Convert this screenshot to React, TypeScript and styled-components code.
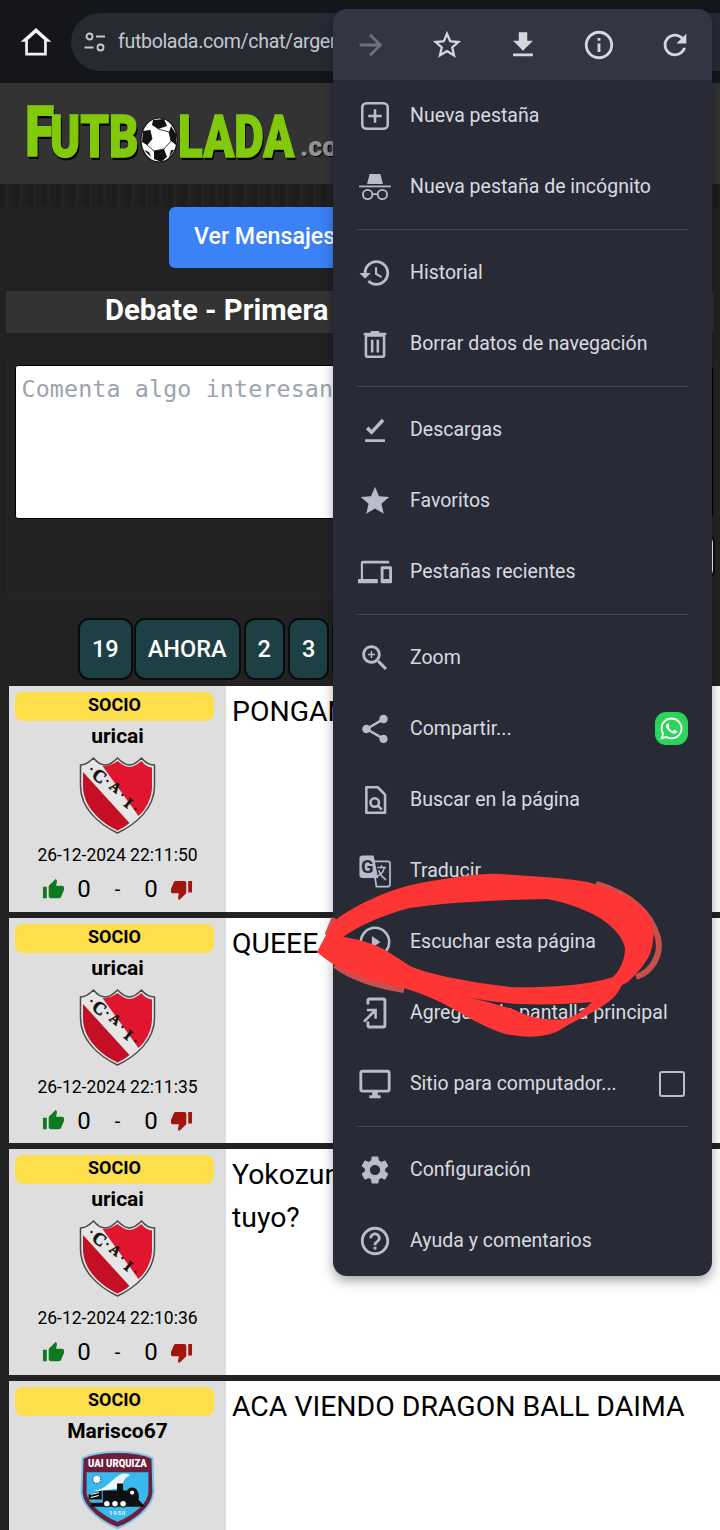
import React from "react";
import styled, { createGlobalStyle } from "styled-components";
import { FaWhatsapp } from "react-icons/fa";

const Global = createGlobalStyle`
  html, body {
    margin: 0;
    padding: 0;
    background: #222222;
    overflow: hidden;
  }
  * { box-sizing: border-box; }
`;

const Page = styled.div`
  position: relative;
  width: 720px;
  height: 1530px;
  overflow: hidden;
  background: #222222;
  font-family: Roboto, "Liberation Sans", sans-serif;
  color: #000;
`;

// Browser toolbar
const BrowserBar = styled.div`
  height: 83px;
  background: #14161c;
  display: flex;
  align-items: center;
  padding-left: 18px;
  gap: 17px;
`;

const UrlPill = styled.div`
  flex: 1;
  height: 58px;
  margin-right: -60px;
  border-radius: 29px;
  background: #262a33;
  display: flex;
  align-items: center;
  gap: 11px;
  padding-left: 12px;
  color: #c6c8ce;
  font-size: 19.6px;
  letter-spacing: -0.35px;
  white-space: nowrap;
  overflow: hidden;
`;

// Site header
const SiteHeader = styled.header`
  height: 101px;
  background: #333333;
  display: flex;
  align-items: center;
  padding: 0 0 0 25px;
`;

const Logo = styled.div`
  display: flex;
  align-items: flex-end;
  height: 60px;
  font-family: Roboto, sans-serif;
  font-weight: 900;
  color: #82c90c;
  text-shadow: 1px 2px 0 #000, -1px 1px 0 #000, 2px 3px 0 #000;
  white-space: nowrap;
  line-height: 1;
`;

const LogoLetters = styled.span<{ $size: number; $width: number }>`
  display: inline-block;
  width: ${(p) => p.$width}px;
  font-size: ${(p) => p.$size}px;
  margin-bottom: -3px;
  transform: scaleX(0.76);
  transform-origin: left bottom;
  -webkit-text-stroke: 1.5px #82c90c;
`;

const LogoInitial = styled(LogoLetters)`
  letter-spacing: -7px;
`;

const LogoDomain = styled.span`
  color: #949494;
  font-size: 27px;
  font-weight: 900;
  margin: 0 0 3px 1px;
  text-shadow: 1px 1px 0 #000;
`;

const LogoBall = styled.svg`
  width: 38px;
  height: 46px;
  margin: 0 0 1px 0;
  flex: none;
`;

const Band = styled.div`
  height: 23px;
  background: repeating-linear-gradient(90deg, #1c1c1c 0 5px, #232323 5px 9px, #1f1f1f 9px 14px);
`;

const ActionRow = styled.div`
  display: flex;
  padding-left: 169px;
`;

const BlueButton = styled.button`
  height: 61px;
  width: 382px;
  padding: 0 25px 4px;
  border: 0;
  border-radius: 6px;
  background: #3b82f6;
  color: #fff;
  font: 500 23.2px Roboto, sans-serif;
  text-align: left;
`;

const TitleBar = styled.h1`
  margin: 23px 6px 0;
  height: 42px;
  padding-left: 99px;
  background: #333333;
  color: #fff;
  font: 700 29.3px/38px Roboto, sans-serif;
  white-space: nowrap;
`;

const CommentPanel = styled.div`
  margin: 25px 1px 0 8px;
  height: 237px;
  padding: 7px 6px 0 7px;
  background: #232323;
  box-shadow: -1px 1px 0 #282828;
  display: flex;
  flex-direction: column;
`;

const CommentBox = styled.textarea`
  display: block;
  flex: none;
  height: 154px;
  width: 100%;
  padding: 5px 6px 5px 5.5px;
  border: 1px solid #000;
  border-radius: 3px;
  background: #fff;
  resize: none;
  font: 23.3px/36px "DejaVu Sans Mono", monospace;
  letter-spacing: 0.14px;
  &::placeholder { color: #9ca3af; opacity: 1; }
`;

const SubmitButton = styled.button`
  align-self: flex-end;
  margin: 14px -2px 0 0;
  width: 120px;
  height: 47px;
  border: 2px solid #0b0b0b;
  border-radius: 10px;
  background: #fff;
`;

// Paginator
const Pager = styled.nav`
  margin: 23px 0 6px;
  height: 62px;
  padding-left: 78px;
  display: flex;
  gap: 3px;
`;

const PageButton = styled.div`
  height: 62px;
  min-width: 41px;
  padding: 0 12px;
  display: flex;
  align-items: center;
  justify-content: center;
  background: #1c4044;
  border: 2px solid #0b0b0b;
  border-radius: 11px;
  color: #fff;
  font-size: 23.5px;
  font-weight: 500;
  &:first-child { margin-right: -2px; }
`;

// Chat rows
const RowList = styled.div`
  display: flex;
  flex-direction: column;
  gap: 6px;
  margin-left: 9px;
`;

const Row = styled.article`
  height: 225.67px;
  display: flex;
  flex: none;
`;

const UserCell = styled.div`
  width: 217px;
  flex: none;
  padding-top: 6px;
  background: #dedede;
  display: flex;
  flex-direction: column;
  align-items: center;
`;

const Badge = styled.div`
  align-self: flex-start;
  margin-left: 6px;
  width: 199px;
  height: 29px;
  border-radius: 8px;
  background: #fddf4b;
  font-size: 18px;
  font-weight: 700;
  line-height: 26px;
  text-align: center;
`;

const UserName = styled.div`
  height: 28px;
  margin-top: 1px;
  font-size: 21px;
  font-weight: 700;
  line-height: 28px;
`;

const Crest = styled.svg`
  display: block;
  width: 77px;
  height: 78px;
  margin-top: 6px;
`;

const DateText = styled.div`
  margin-top: 9px;
  height: 24px;
  font-size: 17.5px;
  line-height: 24px;
`;

const Votes = styled.div`
  margin-top: 8px;
  height: 28px;
  display: flex;
  align-items: center;
  gap: 12px;
  font-size: 24px;
`;

const VoteDash = styled.span`
  margin: 0 12px;
  font-size: 20px;
`;

const VoteIcon = styled.svg<{ $color: string }>`
  width: 23px;
  height: 23px;
  fill: ${(p) => p.$color};
`;

const Message = styled.div`
  flex: 1;
  background: #fff;
  padding: 4px 6px;
  font-size: 28.4px;
  line-height: 43px;
`;

// Chrome overflow menu
const Menu = styled.div`
  position: absolute;
  left: 333px;
  top: 9px;
  width: 379px;
  border-radius: 14px;
  background: #282b35;
  overflow: hidden;
  box-shadow: 0 5px 12px rgba(0, 0, 0, 0.35);
`;

const MenuTop = styled.div`
  height: 71px;
  background: #323642;
  display: flex;
  align-items: center;
  justify-content: space-between;
  padding: 0 20px 0 21px;
`;

const TopIcon = styled.svg<{ $dim?: boolean }>`
  width: 34px;
  height: 34px;
  fill: ${(p) => (p.$dim ? "#6d717c" : "#d5d7dd")};
`;

const MenuRow = styled.div`
  height: 71px;
  display: flex;
  align-items: center;
  padding: 0 24px 0 25px;
  gap: 18px;
  color: #d9dbe1;
  font-size: 19.5px;
`;

const MenuIcon = styled.svg`
  width: 34px;
  height: 34px;
  flex: none;
  fill: #b9bdcb;
  stroke: none;
`;

const MenuLabel = styled.span`
  flex: 1;
  white-space: nowrap;
`;

const Divider = styled.hr`
  margin: 7px 24px;
  border: 0;
  height: 1px;
  background: #444853;
`;

const WhatsTile = styled.div`
  width: 33px;
  height: 33px;
  border-radius: 11px;
  background: #2bd45a;
  color: #fff;
  display: flex;
  align-items: center;
  justify-content: center;
  font-size: 25px;
`;

const CheckBox = styled.div`
  width: 26px;
  height: 26px;
  margin-right: 3px;
  border: 2.5px solid #b9bdcb;
  border-radius: 3px;
`;

const Scribble = styled.svg`
  position: absolute;
  left: 300px;
  top: 860px;
  width: 380px;
  height: 190px;
`;

const home = "M12 2.6 1.8 11.9h3V21h14.4v-9.1h3L12 2.6zm0 3.2 5.4 4.9v8.5H6.6v-8.5L12 5.8z";
const thumbUp = "M1 21h4V9H1v12zm22-11c0-1.1-.9-2-2-2h-6.31l.95-4.57.03-.32c0-.41-.17-.79-.44-1.06L14.17 1 7.59 7.59C7.22 7.95 7 8.45 7 9v10c0 1.1.9 2 2 2h9c.83 0 1.54-.5 1.84-1.22l3.02-7.05c.09-.23.14-.47.14-.73v-2z";
const thumbDown = "M15 3H6c-.83 0-1.54.5-1.84 1.22l-3.02 7.05c-.09.23-.14.47-.14.73v2c0 1.1.9 2 2 2h6.31l-.95 4.57-.03.32c0 .41.17.79.44 1.06L9.83 23l6.59-6.59c.36-.36.58-.86.58-1.41V5c0-1.1-.9-2-2-2zm4 0v12h4V3h-4z";

const topIcons = [
  { d: "M12 4l-1.41 1.41L16.17 11H4v2h12.17l-5.58 5.59L12 20l8-8z", dim: true },
  { d: "M22 9.24l-7.19-.62L12 2 9.19 8.63 2 9.24l5.46 4.73L5.82 21 12 17.27 18.18 21l-1.63-7.03L22 9.24zM12 15.4l-3.76 2.27 1-4.28-3.32-2.88 4.38-.38L12 6.1l1.71 4.04 4.38.38-3.32 2.88 1 4.28L12 15.4z" },
  { d: "M19 9h-4V3H9v6H5l7 7 7-7zM5 18v2h14v-2H5z" },
  { d: "M11 7h2v2h-2zm0 4h2v6h-2zm1-9C6.48 2 2 6.48 2 12s4.48 10 10 10 10-4.48 10-10S17.52 2 12 2zm0 18c-4.41 0-8-3.59-8-8s3.59-8 8-8 8 3.59 8 8-3.59 8-8 8z" },
  { d: "M17.65 6.35C16.2 4.9 14.21 4 12 4c-4.42 0-7.99 3.58-7.99 8s3.57 8 7.99 8c3.73 0 6.84-2.55 7.73-6h-2.08c-.82 2.33-3.04 4-5.65 4-3.31 0-6-2.69-6-6s2.69-6 6-6c1.66 0 3.14.69 4.22 1.78L13 11h7V4l-2.35 2.35z" },
];

const line = { fill: "none", stroke: "#b9bdcb", strokeWidth: 1.8 };

const menuGroups: { label: string; icon: React.ReactNode; tail?: "whats" | "check" }[][] = [
  [
    {
      label: "Nueva pestaña",
      icon: (
        <>
          <rect x="3" y="3" width="18" height="18" rx="3" {...line} />
          <path d="M12 7.2v9.6M7.2 12h9.6" {...line} />
        </>
      ),
    },
    {
      label: "Nueva pestaña de incógnito",
      icon: (
        <>
          <path d="M8.2 2.8h7.6l1.8 7H6.4z" />
          <rect x="0.8" y="11" width="22.4" height="1.2" />
          <circle cx="6.8" cy="17.3" r="3.3" {...line} strokeWidth={1.3} />
          <circle cx="17.2" cy="17.3" r="3.3" {...line} strokeWidth={1.3} />
          <path d="M10.1 17h3.8" {...line} strokeWidth={1.3} />
        </>
      ),
    },
  ],
  [
    {
      label: "Historial",
      icon: <path d="M13 3c-4.97 0-9 4.03-9 9H1l3.89 3.89.07.14L9 12H6c0-3.87 3.13-7 7-7s7 3.13 7 7-3.13 7-7 7c-1.93 0-3.68-.79-4.94-2.06l-1.42 1.42C8.27 19.99 10.51 21 13 21c4.97 0 9-4.03 9-9s-4.03-9-9-9zm-1 5v5l4.28 2.54.72-1.21-3.5-2.08V8H12z" />,
    },
    {
      label: "Borrar datos de navegación",
      icon: (
        <>
          <path d="M4 4h16v1.8H4zM9 2.8h6V4H9z" />
          <rect x="5.6" y="6" width="12.8" height="15" rx="1" {...line} />
          <path d="M10 9v9M14 9v9" {...line} />
        </>
      ),
    },
  ],
  [
    { label: "Descargas", icon: <path d="M5 18.5h14v2H5v-2zm4.6-3.2L5.6 11.4l1.8-1.8 2.2 2.2L16.8 4l1.8 1.9-9 9.4z" /> },
    { label: "Favoritos", icon: <path d="M12 17.27L18.18 21l-1.64-7.03L22 9.24l-7.19-.61L12 2 9.19 8.63 2 9.24l5.46 4.73L5.82 21z" /> },
    {
      label: "Pestañas recientes",
      icon: <path d="M3.5 6H22V4H3.5C2.4 4 2 4.9 2 6v11H0v3h14v-3H3.5V6zm19.5 2h-6c-.55 0-1 .45-1 1v10c0 .55.45 1 1 1h6c.55 0 1-.45 1-1V9c0-.55-.45-1-1-1zm-1 9h-4v-7h4v7z" />,
    },
  ],
  [
    {
      label: "Zoom",
      icon: (
        <>
          <path d="M15.5 14h-.79l-.28-.27C15.41 12.59 16 11.11 16 9.5 16 5.91 13.09 3 9.5 3S3 5.91 3 9.5 5.91 16 9.5 16c1.61 0 3.09-.59 4.23-1.57l.27.28v.79l5 4.99L20.49 19l-4.99-5zm-6 0C7.01 14 5 11.99 5 9.5S7.01 5 9.5 5 14 7.01 14 9.5 11.99 14 9.5 14z" />
          <path d="M12 10h-2v2H9v-2H7V9h2V7h1v2h2v1z" />
        </>
      ),
    },
    {
      label: "Compartir...",
      tail: "whats",
      icon: <path d="M18 16.08c-.76 0-1.44.3-1.96.77L8.91 12.7c.05-.23.09-.46.09-.7s-.04-.47-.09-.7l7.05-4.11c.54.5 1.25.81 2.04.81 1.66 0 3-1.34 3-3s-1.34-3-3-3-3 1.34-3 3c0 .24.04.47.09.7L8.04 9.81C7.5 9.31 6.79 9 6 9c-1.66 0-3 1.34-3 3s1.34 3 3 3c.79 0 1.5-.31 2.04-.81l7.12 4.16c-.05.21-.08.43-.08.65 0 1.61 1.31 2.92 2.92 2.92 1.61 0 2.92-1.31 2.92-2.92s-1.31-2.92-2.92-2.92z" />,
    },
    {
      label: "Buscar en la página",
      icon: (
        <>
          <path d="M5.9 3h8l5.2 5.2V21H5.9z" {...line} strokeLinejoin="round" />
          <circle cx="11.8" cy="13.8" r="3" {...line} />
          <path d="M14 16l2.8 2.8" {...line} />
        </>
      ),
    },
    {
      label: "Traducir...",
      icon: (
        <>
          <path d="M10.4 5.2H21c1.1 0 1.6.7 1.6 1.6v14.6c0 1-.6 1.6-1.6 1.6H13z" {...line} fill="#282b35" strokeWidth={1.2} />
          <path d="M1 2.8C1 1.8 2 1 3 1h8l3.2 16H3c-1 0-2-.8-2-1.8z" />
          <text x="2.2" y="13.5" fontFamily="Roboto, sans-serif" fontWeight="700" fontSize="13" fill="#282b35">G</text>
          <path d="M13.6 9.5h6.2M16.6 8v1.5M18.6 9.5c-.6 3-2.4 5.2-5 6.3M14.6 11.4c.8 2.6 2.8 5 5.2 6.8" {...line} strokeWidth={1.1} />
        </>
      ),
    },
    {
      label: "Escuchar esta página",
      icon: (
        <>
          <circle cx="12" cy="12" r="10" {...line} />
          <path d="M9.8 7.8l6 4.2-6 4.2z" />
        </>
      ),
    },
    {
      label: "Agregar a la pantalla principal",
      icon: <path d="M18 1.01L8 1c-1.1 0-2 .9-2 2v3h2V3.2h10v17.6H8V18H6v3c0 1.1.9 2 2 2h10c1.1 0 2-.9 2-2V3c0-1.1-.9-1.99-2-1.99zM11.5 16h1.8V9H6.3v1.8h3.9L3.6 17.4l1.3 1.3 6.6-6.6V16z" />,
    },
    {
      label: "Sitio para computador...",
      tail: "check",
      icon: <path d="M21 2H3c-1.1 0-2 .9-2 2v12c0 1.1.9 2 2 2h7v2H8v2h8v-2h-2v-2h7c1.1 0 2-.9 2-2V4c0-1.1-.9-2-2-2zm0 14H3V4h18v12z" />,
    },
  ],
  [
    {
      label: "Configuración",
      icon: <path d="M19.14 12.94c.04-.3.06-.61.06-.94 0-.32-.02-.64-.07-.94l2.03-1.58c.18-.14.23-.41.12-.61l-1.92-3.32c-.12-.22-.37-.29-.59-.22l-2.39.96c-.5-.38-1.03-.7-1.62-.94l-.36-2.54c-.04-.24-.24-.41-.48-.41h-3.84c-.24 0-.43.17-.47.41l-.36 2.54c-.59.24-1.13.57-1.62.94l-2.39-.96c-.22-.08-.47 0-.59.22L2.74 8.87c-.12.21-.08.47.12.61l2.03 1.58c-.05.3-.09.63-.09.94s.02.64.07.94l-2.03 1.58c-.18.14-.23.41-.12.61l1.92 3.32c.12.22.37.29.59.22l2.39-.96c.5.38 1.03.7 1.62.94l.36 2.54c.05.24.24.41.48.41h3.84c.24 0 .44-.17.47-.41l.36-2.54c.59-.24 1.13-.56 1.62-.94l2.39.96c.22.08.47 0 .59-.22l1.92-3.32c.12-.22.07-.47-.12-.61l-2.01-1.58zM12 15.6c-1.98 0-3.6-1.62-3.6-3.6s1.62-3.6 3.6-3.6 3.6 1.62 3.6 3.6-1.62 3.6-3.6 3.6z" />,
    },
    {
      label: "Ayuda y comentarios",
      icon: <path d="M11 18h2v-2h-2v2zm1-16C6.48 2 2 6.48 2 12s4.48 10 10 10 10-4.48 10-10S17.52 2 12 2zm0 18c-4.41 0-8-3.59-8-8s3.59-8 8-8 8 3.59 8 8-3.59 8-8 8zm0-14c-2.21 0-4 1.79-4 4h2c0-1.1.9-2 2-2s2 .9 2 2c0 2-3 1.75-3 5h2c0-2.25 3-2.5 3-5 0-2.21-1.79-4-4-4z" />,
    },
  ],
];

const posts = [
  { club: "cai", user: "uricai", date: "26-12-2024 22:11:50", text: ["PONGAN"] },
  { club: "cai", user: "uricai", date: "26-12-2024 22:11:35", text: ["QUEEE"] },
  { club: "cai", user: "uricai", date: "26-12-2024 22:10:36", text: ["Yokozuna", "tuyo?"] },
  { club: "uai", user: "Marisco67", date: "", text: ["ACA VIENDO DRAGON BALL DAIMA"] },
];

function CaiCrest() {
  const shield = "M1 9 C5 9 10 6 14 2 C18 7 22 9 26 9 C30 9 34 6 38 2 C42 6 46 9 50 9 C54 9 58 6 62 2 C66 7 70 9 75 9 L75 30 C75 52 57 68 38 77 C19 68 1 52 1 30 Z";
  return (
    <Crest viewBox="0 0 76 78">
      <path d={shield} fill="#e6e6e6" stroke="#4a4a4a" strokeWidth="1.5" />
      <path d="M23 10 C29 10 34 8 38 5 C42 8 46 11 50 11 C54 11 58 8 62 5 C65 9 68 11 72.5 11.5 V32 C72 43 66 54 59 60 Z" fill="#e0162f" />
      <path d="M3.5 16 L50 67 C45 71 41 73 38 74.5 C20 66 3.5 50 3.5 30 Z" fill="#c50f25" />
      <g fontFamily="'Liberation Serif', serif" fontWeight="700" fill="#111" textAnchor="middle" stroke="#111" strokeWidth="0.5">
        <text x="20" y="26" transform="rotate(38 20 20)" fontSize="18">C</text>
        <text x="36" y="36" transform="rotate(38 36 31)" fontSize="14">A</text>
        <text x="49" y="52" transform="rotate(38 49 47)" fontSize="15">I</text>
      </g>
      <g fill="#111">
        <circle cx="12" cy="13" r="1.2" />
        <circle cx="28" cy="25" r="1.2" />
        <circle cx="43" cy="39" r="1.2" />
        <circle cx="56" cy="53" r="1.2" />
      </g>
    </Crest>
  );
}

function UaiCrest() {
  return (
    <Crest viewBox="2 1 73 77">
      <path d="M4 8 C14 3 26 2 38.5 2 C51 2 63 3 73 8 L74 42 C73 58 52 72 38.5 77 C25 72 4 58 3 42 Z" fill="#6d1e3b" stroke="#7cc6ee" strokeWidth="2" />
      <path d="M8 22 H69 V42 C68 55 50 66 38.5 71 C27 66 9 55 8 42 Z" fill="#38b8ec" />
      <text x="38.5" y="17" textAnchor="middle" fontFamily="Roboto, sans-serif" fontWeight="900" fontSize="11" fill="#fff" textLength="58" lengthAdjust="spacingAndGlyphs">UAI URQUIZA</text>
      <circle cx="18" cy="29" r="4" fill="#fff" stroke="#1d6f9d" strokeDasharray="1 1" strokeWidth="1.5" />
      <path d="M15 40 C26 40 32 30 40 25 C44 22 50 23 51 25 C46 27 43 31 44 38 C36 37 26 42 15 40 Z" fill="#eaf7ff" />
      <path d="M10 44 L23 40 V49 H10 Z M24 40 H38 V33 H44 V40 H48 C50 36 56 36 58 40 C60 44 60 47 59 49 L66 56 H12 V52 H24 Z" fill="#101010" />
      <path d="M12 44 L20 42 M12 47 L20 45" stroke="#fff" strokeWidth="1" />
      <circle cx="28" cy="53" r="3.2" fill="#fff" stroke="#111" />
      <circle cx="36" cy="53" r="3.2" fill="#fff" stroke="#111" />
      <circle cx="44" cy="53" r="3.2" fill="#fff" stroke="#111" />
      <circle cx="53" cy="42" r="2.6" fill="#fff" stroke="#111" />
      <text x="38.5" y="64" textAnchor="middle" fontFamily="Roboto, sans-serif" fontWeight="700" fontSize="6" fill="#e6f6ff" letterSpacing="0.8">1950</text>
    </Crest>
  );
}

function Ball() {
  return (
    <LogoBall viewBox="0 0 38 46">
      <ellipse cx="19" cy="23" rx="18" ry="22" fill="#fff" stroke="#111" strokeWidth="1.2" />
      <path d="M13 3 L24 2 L27 9 L18 12 L12 8 Z M31 9 L36 17 L36 28 L31 24 L29 15 Z M3 14 L10 13 L12 22 L7 28 L2 25 Z M14 34 L24 32 L27 40 L21 45 L14 42 Z M31 33 L34 33 L29 41 Z M4 33 L9 35 L11 40 Z" fill="#111" />
      <path d="M18 12 L29 15 L31 24 L24 32 L14 34 L7 28 L12 22 L10 13" fill="none" stroke="#111" strokeWidth="0.8" />
    </LogoBall>
  );
}

export default function App() {
  return (
    <Page>
      <Global />
      <BrowserBar>
        <svg width="36" height="36" viewBox="0 0 24 24" fill="#f2f2f2" style={{ flex: "none" }}>
          <path d={home} />
        </svg>
        <UrlPill>
          <svg width="24" height="24" viewBox="0 0 24 24" fill="none" stroke="#c6c8ce" strokeWidth="1.9" style={{ flex: "none" }}>
            <circle cx="6.5" cy="6.5" r="3" />
            <path d="M13 6.5h9M1.5 17.5h9" />
            <circle cx="17.5" cy="17.5" r="3" />
          </svg>
          futbolada.com/chat/argentina
        </UrlPill>
      </BrowserBar>

      <SiteHeader>
        <Logo>
          <LogoInitial $size={70} $width={25}>F</LogoInitial>
          <LogoLetters $size={60} $width={90}>UTB</LogoLetters>
          <Ball />
          <LogoLetters $size={60} $width={121}>LADA</LogoLetters>
          <LogoDomain>.com</LogoDomain>
        </Logo>
      </SiteHeader>
      <Band />

      <ActionRow>
        <BlueButton>Ver Mensajes</BlueButton>
      </ActionRow>
      <TitleBar>Debate - Primera</TitleBar>

      <CommentPanel>
        <CommentBox placeholder="Comenta algo interesante..." />
        <SubmitButton />
      </CommentPanel>

      <Pager>
        {["19", "AHORA", "2", "3", ""].map((n) => (
          <PageButton key={n}>{n}</PageButton>
        ))}
      </Pager>

      <RowList>
        {posts.map((post) => (
          <Row key={post.date + post.user}>
            <UserCell>
              <Badge>SOCIO</Badge>
              <UserName>{post.user}</UserName>
              {post.club === "cai" ? <CaiCrest /> : <UaiCrest />}
              {post.date && (
                <>
                  <DateText>{post.date}</DateText>
                  <Votes>
                    <VoteIcon viewBox="0 0 24 24" $color="#0d7a1f"><path d={thumbUp} /></VoteIcon>
                    <span>0</span>
                    <VoteDash>-</VoteDash>
                    <span>0</span>
                    <VoteIcon viewBox="0 0 24 24" $color="#a3160f"><path d={thumbDown} /></VoteIcon>
                  </Votes>
                </>
              )}
            </UserCell>
            <Message>
              {post.text.map((t) => (
                <div key={t}>{t}</div>
              ))}
            </Message>
          </Row>
        ))}
      </RowList>

      <Menu>
        <MenuTop>
          {topIcons.map((ic) => (
            <TopIcon key={ic.d} viewBox="0 0 24 24" $dim={ic.dim}>
              <path d={ic.d} />
            </TopIcon>
          ))}
        </MenuTop>
        {menuGroups.map((group, i) => (
          <React.Fragment key={group[0].label}>
            {i > 0 && <Divider />}
            {group.map((item) => (
              <MenuRow key={item.label}>
                <MenuIcon viewBox="0 0 24 24">{item.icon}</MenuIcon>
                <MenuLabel>{item.label}</MenuLabel>
                {item.tail === "whats" && (
                  <WhatsTile>
                    <FaWhatsapp />
                  </WhatsTile>
                )}
                {item.tail === "check" && <CheckBox />}
              </MenuRow>
            ))}
          </React.Fragment>
        ))}
      </Menu>

      <Scribble viewBox="300 860 380 190">
        <path d="M596 884 C628 893 651 912 658 938 C662 955 652 972 636 977" fill="none" stroke="#c8504c" strokeWidth="6" />
        <path d="M335 965 C352 978 380 986 404 990" fill="none" stroke="#c8504c" strokeWidth="6" />
        <path d="M327 935 L334 918" fill="none" stroke="#c8504c" strokeWidth="5" />
        <path
          fill="#fd3535"
          fillRule="evenodd"
          d="M317 952 L333 922 C350 908 385 890 420 883 C455 877 480 873 500 874 C530 876 565 878 588 882 C610 888 635 897 646 912 C656 925 655 945 648 958 C642 968 635 975 628 982 L622 985 C617 995 612 1000 604 1005 C590 1015 575 1020 560 1030 C545 1038 525 1038 505 1034 C480 1026 460 1012 440 1002 C420 992 395 985 375 981 C355 976 335 968 317 952 Z
          M343 937 C360 925 385 914 410 908 C450 902 500 900 547 899 C570 903 590 912 600 918 C615 928 623 938 625 948 C625 960 620 970 613 977 C590 985 550 988 510 987 C470 982 430 975 410 966 C398 958 388 951 377 946 C365 941 352 938 343 937 Z
          M462 996 C480 1000 500 1003 520 1004 C545 1005 570 1004 592 1002 C585 1010 575 1016 565 1019 C550 1021 530 1018 515 1010 C500 1005 480 1000 462 996 Z"
        />
      </Scribble>
    </Page>
  );
}
